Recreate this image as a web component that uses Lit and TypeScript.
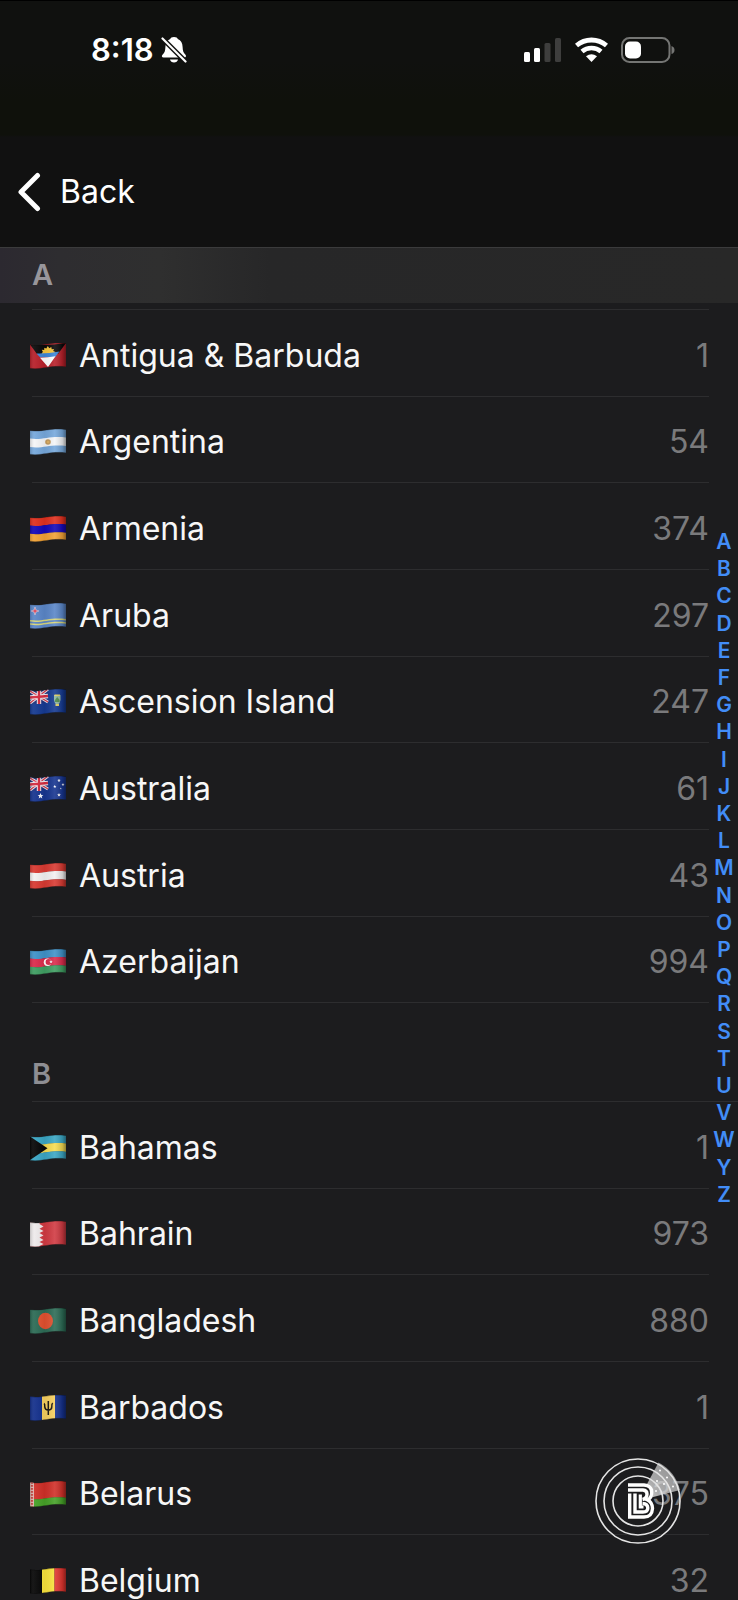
import { LitElement, html, svg, css, TemplateResult } from "lit";
import { customElement, property } from "lit/decorators.js";

interface Country {
  flag: string;
  name: string;
  code: string;
}

const SECTIONS: { letter: string; countries: Country[] }[] = [
  {
    letter: "A",
    countries: [
      { flag: "ag", name: "Antigua & Barbuda", code: "1" },
      { flag: "ar", name: "Argentina", code: "54" },
      { flag: "am", name: "Armenia", code: "374" },
      { flag: "aw", name: "Aruba", code: "297" },
      { flag: "ac", name: "Ascension Island", code: "247" },
      { flag: "au", name: "Australia", code: "61" },
      { flag: "at", name: "Austria", code: "43" },
      { flag: "az", name: "Azerbaijan", code: "994" },
    ],
  },
  {
    letter: "B",
    countries: [
      { flag: "bs", name: "Bahamas", code: "1" },
      { flag: "bh", name: "Bahrain", code: "973" },
      { flag: "bd", name: "Bangladesh", code: "880" },
      { flag: "bb", name: "Barbados", code: "1" },
      { flag: "by", name: "Belarus", code: "375" },
      { flag: "be", name: "Belgium", code: "32" },
    ],
  },
];

const LETTERS = "ABCDEFGHIJKLMNOPQRSTUVWYZ".split("");

// A horizontal band of a waving flag; y values run from 0 (top) to 25 (bottom).
const band = (y0: number, y1: number, fill: string) => svg`
  <path fill=${fill} d="M0 ${y0 + 1.5}C12 ${y0 + 3.5} 20 ${y0 - 1.5} 36 ${y0 + 0.5}V${y1 + 0.5}C20 ${y1 - 1.5} 12 ${y1 + 3.5} 0 ${y1 + 1.5}Z"/>`;

const upright = (x: number, w: number, fill: string) =>
  svg`<rect x=${x} y="0" width=${w} height="26" fill=${fill}/>`;

const unionJack = svg`
  <path fill="#1d2f78" d="M0 1L18 0V13L0 15Z"/>
  <path d="M0 2L18 13M0 14L18 0" stroke="#e9e6ee" stroke-width="3"/>
  <path d="M0 2L18 13M0 14L18 0" stroke="#d23447" stroke-width="1.2"/>
  <path d="M9 0V15M0 8.500L18 7" stroke="#f1eef2" stroke-width="4.4"/>
  <path d="M9 0V15M0 8.500L18 7" stroke="#d42b40" stroke-width="2.4"/>`;

const star = (x: number, y: number, r: number) =>
  svg`<path fill="#f5f6fb" transform="translate(${x} ${y}) scale(${r})" d="M0-1L.28-.35L.95-.31L.43.12L.59.81L0 .42L-.59.81L-.43.12L-.95-.31L-.28-.35Z"/>`;

const FLAGS: Record<string, TemplateResult> = {
  ag: svg`${band(0, 25, "#b8202a")}
    <path fill="#0a0a0a" d="M0 1.500Q18 3 36 0L28 11H7Z"/>
    <path fill="#f7c63d" d="M11.500 11L12.800 8.800L11.800 6.800L14.200 7L14.300 4.700L16.300 5.500L17.800 3L19.300 5.300L21.300 4L21.700 6.200L24 6L23.200 8L25.500 9L23.500 11Z"/>
    <path fill="#3c86d8" d="M6.500 10.500Q18 10.800 29.500 8.500L25 14.300H10Z"/>
    <path fill="#fff" d="M10 14.800Q18 14.600 25.500 13.200L18 24Z"/>`,
  ar: svg`${band(0, 25, "#76a8dc")}${band(8, 16.5, "#f4f5f7")}
    <circle cx="18" cy="13" r="2.800" fill="#c39a5c"/><circle cx="18" cy="13" r="1.300" fill="#dcae60"/>`,
  am: svg`${band(0, 8.3, "#e0301e")}${band(8, 16.5, "#1408b8")}${band(16.2, 25, "#f2a235")}`,
  aw: svg`${band(0, 25, "#5a86c8")}${band(15.5, 17, "#d8d67a")}${band(18.7, 20.2, "#d8d67a")}
    <path fill="#e0485a" stroke="#dfe3ee" stroke-width=".5" d="M5 4L6 7L9 8L6 9L5 12L4 9L1 8L4 7Z"/>`,
  ac: svg`${band(0, 25, "#153a92")}${unionJack}
    <path fill="#8eb6a0" d="M24 6H30.500V11Q30 15 27.200 16.500Q24.500 15 24 11Z"/>
    <path fill="#4d8a4c" d="M25 11L27.200 8L29.600 11V13H25Z"/>
    <path fill="#e3cf62" d="M24.500 5.500H30V7H24.500ZM25.500 15H29V17H25.500Z"/>`,
  au: svg`${band(0, 25, "#173590")}${unionJack}
    ${star(10.5, 20, 3)}${star(29, 4.5, 1.8)}${star(24.8, 10.5, 1.7)}${star(33, 8.5, 1.6)}${star(30.8, 12.5, 1)}${star(29, 19, 2)}`,
  at: svg`${band(0, 8.3, "#d93a32")}${band(8, 16.5, "#f3f1f1")}${band(16.2, 25, "#d93a32")}`,
  az: svg`${band(0, 8.3, "#3f92c8")}${band(8, 16.5, "#dc2b4c")}${band(16.2, 25, "#3f9e62")}
    <circle cx="17.500" cy="13.200" r="3.700" fill="#fff"/><circle cx="18.600" cy="13.100" r="3" fill="#dc2b4c"/>
    ${star(21, 12.8, 1.8)}`,
  bs: svg`${band(0, 8.3, "#3aa6c4")}${band(8, 16.5, "#f6dc51")}${band(16.2, 25, "#3aa6c4")}
    <path fill="#070707" d="M0 1.500L17.500 13.200L0 25Z"/>`,
  bh: svg`${band(0, 25, "#d13a42")}
    <path fill="#eeeaeb" d="M0 0H10L9.500 3L13.500 5.500L9.500 7.800L13.500 10L9.500 12L13.500 14.500L9.500 16.500L13.500 19L9.500 21L13.500 23L9.500 25V26H0Z"/>`,
  bd: svg`${band(0, 25, "#2c6b55")}<ellipse cx="15.500" cy="13" rx="7.500" ry="8.200" fill="#e0502f"/>`,
  bb: svg`${upright(0, 12, "#14308c")}${upright(12, 13, "#f6cf5f")}${upright(25, 11, "#14308c")}
    <path fill="none" stroke="#191512" stroke-width="1.500" d="M18.300 6V20M14 8.500Q15 9 14.800 12Q15 15 18.300 15.200Q21.700 15 21.800 12Q21.600 9 22.700 8"/>`,
  by: svg`${band(0, 16.5, "#d02f28")}${band(16.2, 25, "#45a127")}
    <rect x="0" y="0" width="4" height="26" fill="#e0b5b0"/>
    <path stroke="#c94640" stroke-width="2.200" stroke-dasharray="1.800 1.200" d="M2 1V26"/>`,
  be: svg`${upright(0, 12, "#070707")}${upright(12, 12.5, "#f9e33c")}${upright(24.500, 11.5, "#e2352f")}`,
};

@customElement("country-flag")
export class CountryFlag extends LitElement {
  @property() code = "";

  static styles = css`
    :host {
      display: block;
      width: 36px;
      height: 26px;
      flex: none;
    }
    .flag {
      display: block;
      width: 100%;
      height: 100%;
    }
  `;

  render() {
    return html`<svg class="flag" viewBox="0 0 36 26" aria-hidden="true">
      <defs>
        <clipPath id="cloth">
          <path d="M0 1.500C12 3.500 20 -1.500 36 .5V23.800C20 21.800 12 27.200 0 25.300Z" />
        </clipPath>
        <linearGradient id="fold">
          <stop offset="0" stop-color="#000" stop-opacity=".18" />
          <stop offset=".12" stop-color="#fff" stop-opacity=".06" />
          <stop offset=".4" stop-color="#000" stop-opacity=".06" />
          <stop offset=".68" stop-color="#fff" stop-opacity=".1" />
          <stop offset=".9" stop-color="#000" stop-opacity=".16" />
          <stop offset="1" stop-color="#000" stop-opacity=".42" />
        </linearGradient>
      </defs>
      <g clip-path="url(#cloth)">
        ${FLAGS[this.code]}
        <rect width="36" height="26" fill="url(#fold)" />
        <path d="M0 1.500C12 3.500 20 -1.500 36 .5" fill="none" stroke="#000" stroke-opacity=".3" />
        <path d="M36 23.800C20 21.800 12 27.200 0 25.300" fill="none" stroke="#000" stroke-opacity=".3" />
      </g>
    </svg>`;
  }
}

@customElement("status-bar")
export class StatusBar extends LitElement {
  static styles = css`
    :host {
      display: flex;
      justify-content: space-between;
      align-items: center;
      height: 98px;
      padding: 0 63px 0 91px;
      color: #fff;
      font-size: 31px;
      font-weight: 600;
    }
    .group {
      display: flex;
      align-items: center;
    }
    .clock {
      gap: 7px;
    }
    .signals {
      gap: 13px;
    }
    svg {
      display: block;
    }
  `;

  render() {
    return html`
      <div class="group clock">
        <time>8:18</time>
        <svg width="26" height="28" viewBox="0 0 26 28" fill="#fff" aria-label="Silent">
          <path d="M13 1C15.200 1 16.500 1.900 16.800 3.100C20 4.400 21.500 7.200 21.600 11C21.700 15 22.500 16.800 24.500 18.800C25.500 19.900 25 21.500 23.500 21.500H2.500C.8 21.500.3 19.900 1.500 18.800C3.500 16.800 4.300 15 4.400 11C4.500 7.200 6.100 4.400 9.200 3.100C9.600 1.900 10.800 1 13 1Z" />
          <path d="M9 23.500H17C16.600 25.400 15 26.500 13 26.500S9.400 25.400 9 23.500Z" />
          <path d="M0 1L26 27" stroke="#10110f" stroke-width="5" />
          <path d="M1.500 2.500L24.500 25.500" stroke="#fff" stroke-width="2.200" stroke-linecap="round" />
        </svg>
      </div>
      <div class="group signals">
        <svg width="38" height="26" viewBox="0 0 38 26" aria-label="Signal">
          <rect x="0" y="15" width="6" height="10" rx="1.500" fill="#fff" />
          <rect x="10" y="11" width="6" height="14" rx="1.500" fill="#fff" />
          <rect x="20.500" y="6" width="6" height="19" rx="1.500" fill="#3e3e3d" />
          <rect x="31" y="1" width="6" height="24" rx="1.500" fill="#3e3e3d" />
        </svg>
        <svg width="33" height="26" viewBox="0 0 33 26" fill="none" stroke="#fff" aria-label="Wi-Fi">
          <path d="M1.500 8.500Q8 3 16.500 3T31.500 8.500" stroke-width="4.800" />
          <path d="M7 14.500Q11 11 16.500 11T26 14.500" stroke-width="4.600" />
          <path d="M11 19.300Q16.500 15 22 19.300L16.500 25Z" fill="#fff" stroke="none" />
        </svg>
        <svg width="54" height="26" viewBox="0 0 54 26" aria-label="Battery">
          <rect x="1" y="1" width="47.500" height="24" rx="7.500" fill="none" stroke="#747573" stroke-width="2" />
          <path d="M50.500 9Q53.500 10 53.500 13T50.500 17Z" fill="#747573" />
          <rect x="4" y="4.500" width="16" height="17" rx="5" fill="#fff" />
        </svg>
      </div>
    `;
  }
}

@customElement("app-root")
export class AppRoot extends LitElement {
  static styles = css`
    :host {
      display: flex;
      flex-direction: column;
      position: relative;
      height: 100vh;
      overflow: hidden;
      background: #1c1c1e;
      color: #f7f7f7;
      font-family: Inter, Roboto, "Liberation Sans", sans-serif;
      font-size: 32px;
      line-height: 40px;
    }
    button {
      border: 0;
      padding: 0;
      background: none;
      color: inherit;
      font: inherit;
      text-align: left;
      cursor: pointer;
    }
    .top {
      flex: none;
      border-top: 1px solid #000;
      background: linear-gradient(#10110f 60px, #0f110b 100px, #0f110b 134px, #111 136px);
    }
    .bar {
      display: flex;
      align-items: center;
      height: 110px;
      padding: 38px 18px 0;
    }
    .back {
      display: flex;
      align-items: center;
      gap: 18px;
      color: #fff;
    }
    .list {
      flex: 1;
      min-height: 0;
      overflow: hidden;
    }
    .heading {
      margin: 0;
      padding: 0 32px;
      color: #8e8e93;
      font-size: 29px;
      font-weight: 600;
    }
    .pinned {
      margin-bottom: 6px;
      border-top: 1px solid #3b3b3c;
      padding-top: 7px;
      padding-bottom: 8px;
      color: #98969b;
      background: linear-gradient(90deg, #2c2930, #2e2d30 60px, #2f2f2f 160px, #272728 270px, #282828);
    }
    .inline {
      padding-top: 51px;
      padding-bottom: 7px;
    }
    .rows {
      margin: 0 0 0 32px;
      border-top: 1px solid #2d2d2f;
      padding: 0;
      list-style: none;
    }
    .pinned + .rows {
      margin-right: 29px;
    }
    .row {
      height: 87px;
      box-sizing: border-box;
      margin-right: 29px;
      border-bottom: 1px solid #2d2d2f;
    }
    .pinned + .rows .row {
      margin-right: 0;
    }
    .row:nth-child(3n + 2) {
      height: 86px;
    }
    .country {
      display: flex;
      align-items: center;
      width: 100%;
      height: 100%;
      padding-top: 5px;
    }
    .flag {
      margin: 0 13px 0 -2px;
    }
    .name {
      flex: 1;
    }
    .code {
      color: #7a7a7c;
    }
    .index {
      position: absolute;
      top: 33%;
      right: 0;
      bottom: 24.5%;
      display: flex;
      flex-direction: column;
      justify-content: space-between;
      width: 28px;
      font-size: 21px;
      font-weight: 600;
      line-height: 27px;
      text-align: center;
    }
    .index a {
      color: #428df7;
      text-decoration: none;
    }
    .assist {
      position: absolute;
      right: 56px;
      bottom: 55px;
      width: 88px;
      height: 88px;
    }
    svg {
      display: block;
    }
  `;

  render() {
    return html`
      <header class="top">
        <status-bar></status-bar>
        <nav class="bar">
          <button class="back">
            <svg width="24" height="40" viewBox="0 0 24 40" aria-hidden="true">
              <path d="M19.500 3.500L3 20L19.500 36.500" fill="none" stroke="#fff" stroke-width="5" stroke-linecap="round" stroke-linejoin="round" />
            </svg>
            <span>Back</span>
          </button>
        </nav>
      </header>
      <main class="list">
        ${SECTIONS.map(
          (section, i) => html`
            <h2 class="heading ${i === 0 ? "pinned" : "inline"}" id=${section.letter}>${section.letter}</h2>
            <ul class="rows">
              ${section.countries.map(
                (c) => html`<li class="row">
                  <button class="country">
                    <country-flag class="flag" code=${c.flag}></country-flag>
                    <span class="name">${c.name}</span>
                    <span class="code">${c.code}</span>
                  </button>
                </li>`
              )}
            </ul>
          `
        )}
      </main>
      <nav class="index" aria-label="Index">
        ${LETTERS.map((l) => html`<a href="#${l}">${l}</a>`)}
      </nav>
      <button class="assist" aria-label="Assistant">
        <svg width="88" height="88" viewBox="0 0 88 88" fill="none" aria-hidden="true">
          <defs>
            <radialGradient id="sweep" gradientUnits="userSpaceOnUse" cx="44" cy="44" r="44">
              <stop offset="0" stop-color="#fff" stop-opacity=".9" />
              <stop offset=".5" stop-color="#ddd" stop-opacity=".75" />
              <stop offset="1" stop-color="#ccc" stop-opacity=".7" />
            </radialGradient>
          </defs>
          <path d="M44 44L64.500 5.500A43.500 43.500 0 0 1 86 33Z" fill="url(#sweep)" />
          <g stroke="#e4e4e4" stroke-width="1.600">
            <circle cx="44" cy="44" r="42" />
            <circle cx="44" cy="44" r="34" />
            <circle cx="44" cy="44" r="25" />
          </g>
          <g fill="#fff">
            <circle cx="66" cy="13.500" r="1" />
            <circle cx="73" cy="20.500" r="1" />
            <circle cx="79" cy="29.500" r="1" />
            <circle cx="63" cy="24" r="1" />
            <circle cx="70" cy="27" r="1" />
            <circle cx="62" cy="34" r="1" />
          </g>
          <path fill="#1c1c1e" d="M34 26H50Q59 27 59 35Q59 40 56 42Q60 45 60 51Q59 61 50 62H34Z" />
          <g stroke="#fff" stroke-width="3.400">
            <path d="M34 28H50Q57.700 28.300 57.700 35.500Q57.700 40.500 53.700 43Q58.500 45.500 58.500 51.500Q58 60 50 60H35.700V36.500" />
            <path d="M34 33H49Q53 33.300 53 37Q53 41.500 48.500 42.500" />
            <path d="M41 36.500V55H49Q53.800 55 53.800 51Q53.800 46.800 48.500 46.500" />
            <path d="M46.300 37.500V50H49.500" stroke-width="3.200" />
          </g>
        </svg>
      </button>
    `;
  }
}
